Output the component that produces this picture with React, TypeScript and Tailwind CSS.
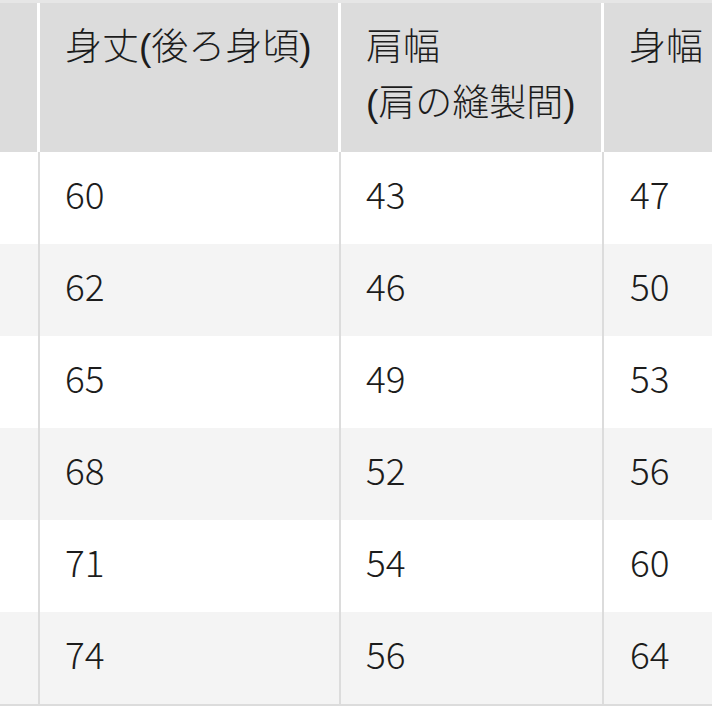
import React from 'react';

// Size chart rows (cm)
const rows: [string, string, string][] = [
  ['60', '43', '47'],
  ['62', '46', '50'],
  ['65', '49', '53'],
  ['68', '52', '56'],
  ['71', '54', '60'],
  ['74', '56', '64'],
];

const headFont = { fontFamily: '"Liberation Sans", "Noto Sans CJK JP", sans-serif' };
const numFont = { fontFamily: '"Noto Sans CJK JP", "Noto Sans", sans-serif' };

export default function App() {
  return (
    <div className="w-[712px] h-[712px] overflow-hidden bg-white text-[#1c1c1c]">
      <div className="h-[3px] bg-[#e6e6e6]" />

      {/* header */}
      <div className="flex h-[149px] text-[37px] leading-[56px] font-light" style={headFont}>
        <div className="w-[40px] shrink-0 bg-[#dcdcdc] border-r-[3px] border-white" />
        <div className="w-[301px] shrink-0 bg-[#dcdcdc] border-r-[3px] border-white pl-[25px] pt-[17px] whitespace-nowrap">
          身丈(後ろ身頃)
        </div>
        <div className="w-[263px] shrink-0 bg-[#dcdcdc] border-r-[3px] border-white pl-[25px] pt-[17px] whitespace-nowrap">
          <div>肩幅</div>
          <div>(肩の縫製間)</div>
        </div>
        <div className="flex-1 bg-[#dcdcdc] pl-[25px] pt-[17px] whitespace-nowrap overflow-hidden">身幅</div>
      </div>

      {/* body */}
      {rows.map((r, i) => (
        <div
          key={i}
          className={`flex h-[92px] text-[37px] font-light items-stretch ${i % 2 === 1 ? 'bg-[#f4f4f4]' : 'bg-white'}`}
          style={numFont}
        >
          <div className="w-[40px] shrink-0 border-r-2 border-[#dcdcdc]" />
          <div className="w-[301px] shrink-0 border-r-2 border-[#dcdcdc] pl-[25px] pb-[9px] flex items-center">{r[0]}</div>
          <div className="w-[263px] shrink-0 border-r-2 border-[#dcdcdc] pl-[25px] pb-[9px] flex items-center">{r[1]}</div>
          <div className="flex-1 pl-[26px] pb-[9px] flex items-center">{r[2]}</div>
        </div>
      ))}
      <div className="h-[2px] bg-[#dcdcdc]" />
    </div>
  );
}
